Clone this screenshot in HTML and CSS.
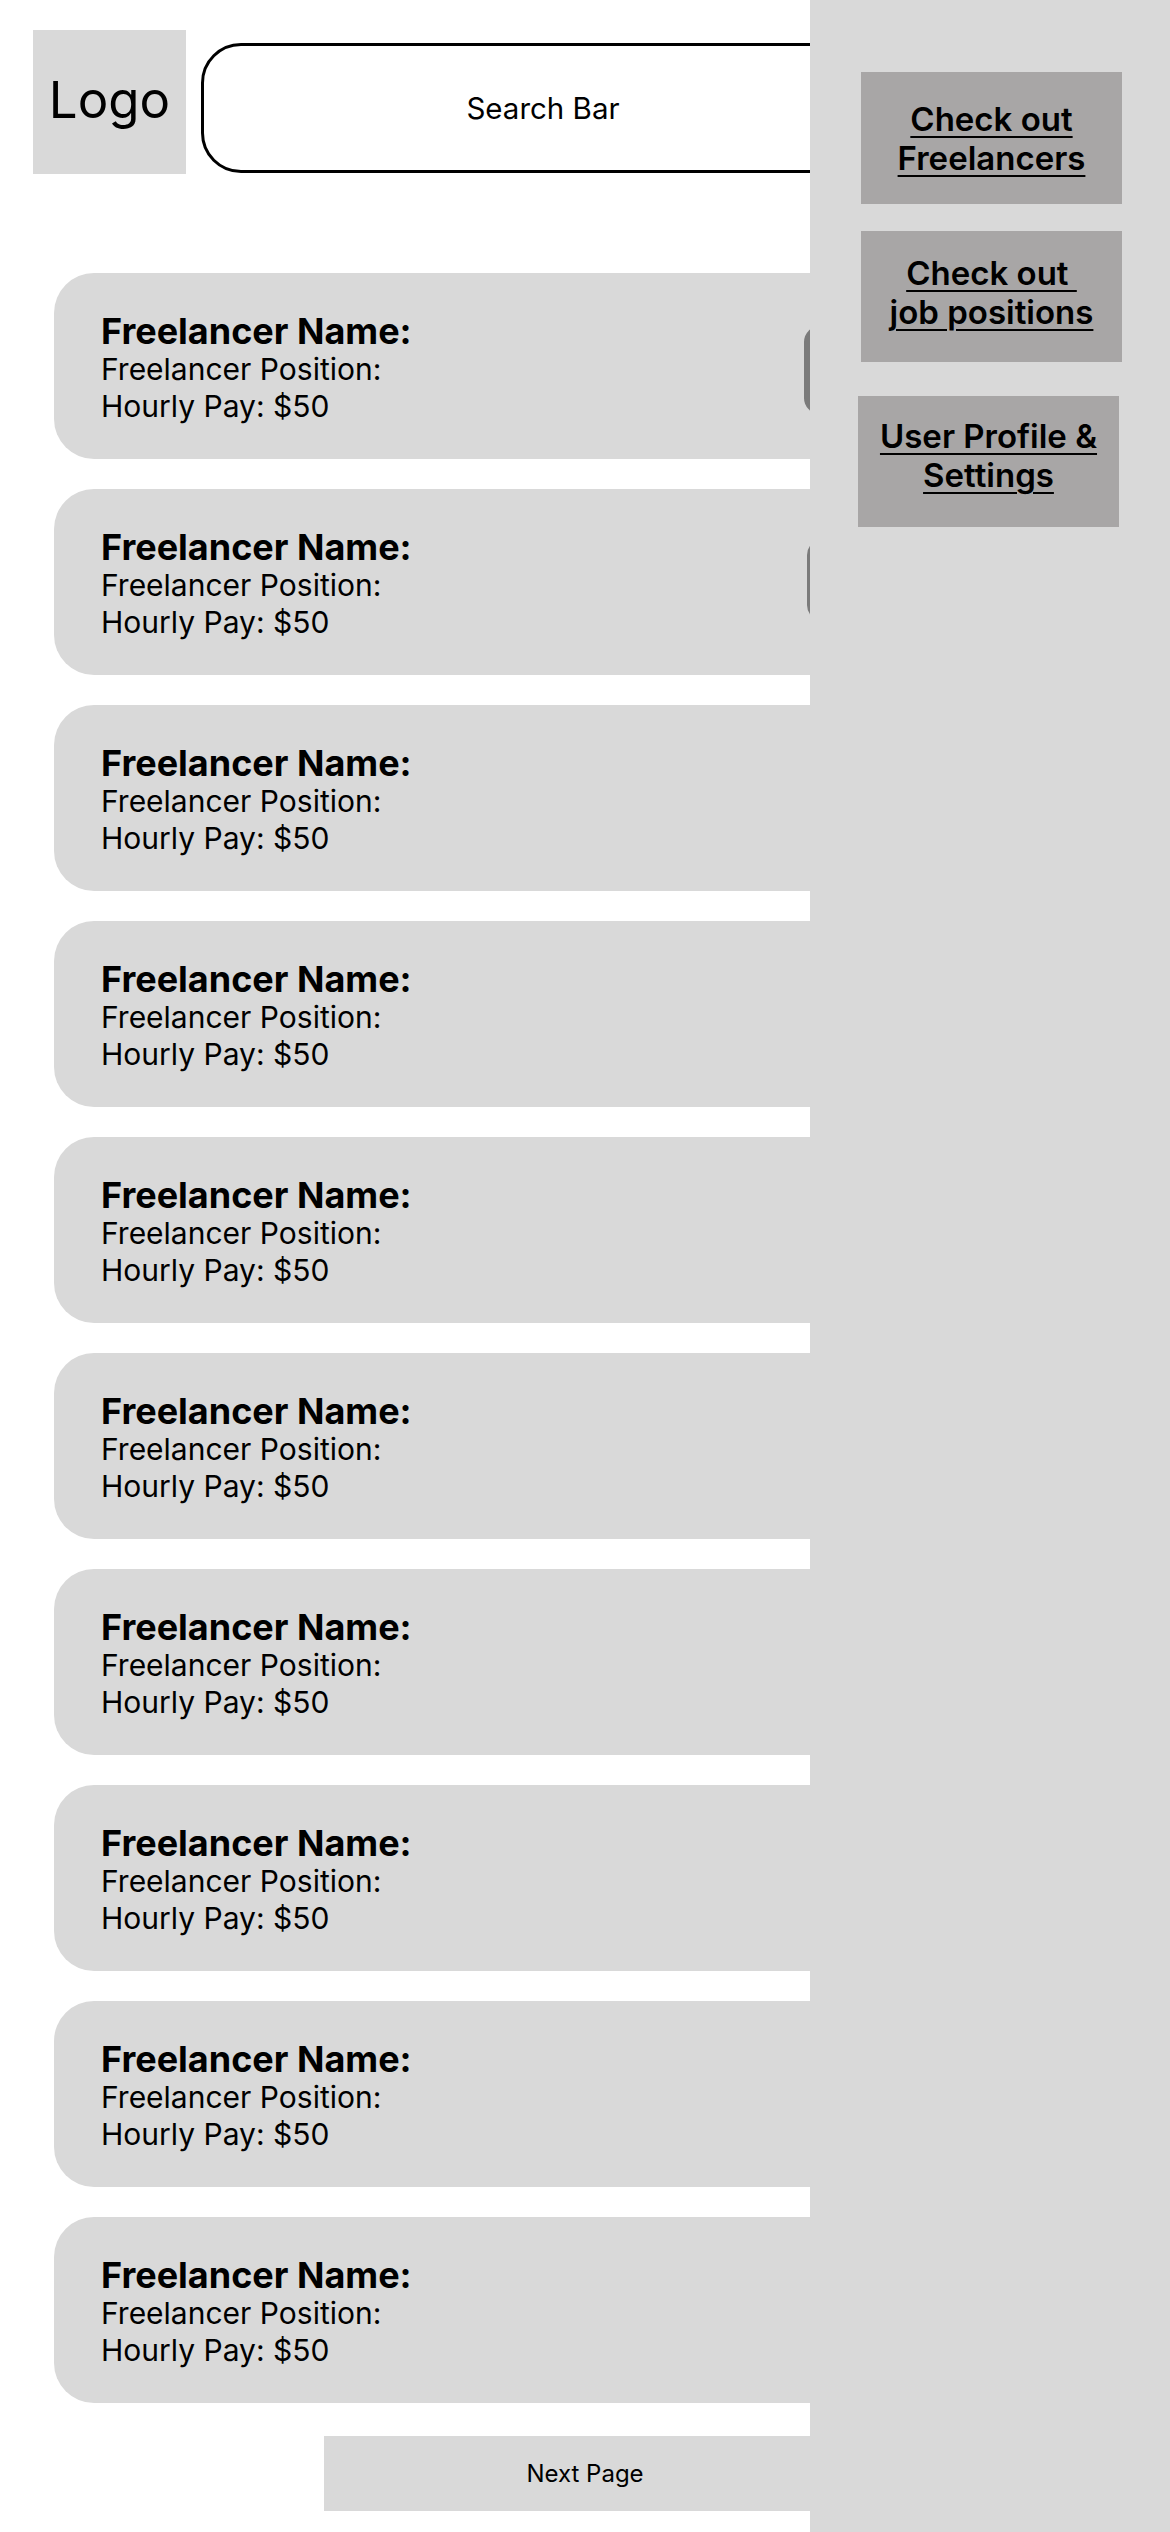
FILE: index.html
```html
<!DOCTYPE html>
<html lang="en">
<head>
<meta charset="utf-8">
<title>Freelancers</title>
<link rel="stylesheet" href="styles.css">
</head>
<body>
<div class="page">
  <main class="main">
    <header class="top">
      <div class="logo">Logo</div>
      <div class="search">Search Bar</div>
    </header>
    <section class="list">
      <article class="card"><div class="info"><div class="name">Freelancer Name:</div><div class="line">Freelancer Position:</div><div class="line">Hourly Pay: $50</div></div><div class="peek peek-a"></div></article>
      <article class="card"><div class="info"><div class="name">Freelancer Name:</div><div class="line">Freelancer Position:</div><div class="line">Hourly Pay: $50</div></div><div class="peek peek-b"></div></article>
      <article class="card"><div class="info"><div class="name">Freelancer Name:</div><div class="line">Freelancer Position:</div><div class="line">Hourly Pay: $50</div></div></article>
      <article class="card"><div class="info"><div class="name">Freelancer Name:</div><div class="line">Freelancer Position:</div><div class="line">Hourly Pay: $50</div></div></article>
      <article class="card"><div class="info"><div class="name">Freelancer Name:</div><div class="line">Freelancer Position:</div><div class="line">Hourly Pay: $50</div></div></article>
      <article class="card"><div class="info"><div class="name">Freelancer Name:</div><div class="line">Freelancer Position:</div><div class="line">Hourly Pay: $50</div></div></article>
      <article class="card"><div class="info"><div class="name">Freelancer Name:</div><div class="line">Freelancer Position:</div><div class="line">Hourly Pay: $50</div></div></article>
      <article class="card"><div class="info"><div class="name">Freelancer Name:</div><div class="line">Freelancer Position:</div><div class="line">Hourly Pay: $50</div></div></article>
      <article class="card"><div class="info"><div class="name">Freelancer Name:</div><div class="line">Freelancer Position:</div><div class="line">Hourly Pay: $50</div></div></article>
      <article class="card"><div class="info"><div class="name">Freelancer Name:</div><div class="line">Freelancer Position:</div><div class="line">Hourly Pay: $50</div></div></article>
    </section>
    <div class="next">Next Page</div>
  </main>
  <aside class="side">
    <a class="nav nav-1" href="#"><span>Check out<br>Freelancers</span></a>
    <a class="nav nav-2" href="#"><span>Check out&nbsp;<br>job positions</span></a>
    <a class="nav nav-3" href="#"><span>User Profile &amp;<br>Settings</span></a>
  </aside>
</div>
</body>
</html>
```
FILE: styles.css
```css
html, body {
  margin: 0;
  padding: 0;
  background: #ffffff;
}

body {
  font-family: Inter, "Noto Sans", "Liberation Sans", sans-serif;
  color: #000000;
}

.page {
  display: flex;
  width: 1170px;
  min-height: 2532px;
}

.main {
  flex: none;
  width: 810px;
  overflow: hidden;
  padding-bottom: 21px;
}

.top {
  display: flex;
  align-items: flex-start;
  gap: 15px;
  padding: 30px 0 0 33px;
}

.logo {
  flex: none;
  box-sizing: border-box;
  width: 153px;
  height: 144px;
  padding-bottom: 6px;
  background: #d9d9d9;
  display: flex;
  align-items: center;
  justify-content: center;
  font-size: 51px;
  line-height: 1;
}

.search {
  flex: none;
  box-sizing: border-box;
  width: 684px;
  height: 130px;
  margin-top: 13px;
  border: 3px solid #000000;
  border-radius: 40px;
  display: flex;
  align-items: center;
  justify-content: center;
  font-size: 29.5px;
}

.list {
  display: flex;
  flex-direction: column;
  gap: 30px;
  margin-top: 99px;
  padding-left: 54px;
}

.card {
  flex: none;
  box-sizing: border-box;
  width: 860px;
  height: 186px;
  background: #d9d9d9;
  border-radius: 40px;
  display: flex;
  align-items: flex-start;
  padding: 38px 0 0 47px;
}

.info {
  flex: none;
  width: 703px;
}

.name {
  font-size: 36px;
  line-height: 40px;
  font-weight: 700;
}

.line {
  font-size: 30px;
  line-height: 36.5px;
  font-weight: 400;
}

.peek {
  flex: none;
  width: 80px;
  background: #7b7b7b;
  border-radius: 16px;
}

.peek-a {
  height: 88px;
  margin-top: 15px;
}

.peek-b {
  height: 82px;
  margin-top: 12px;
  margin-left: 3px;
}

.next {
  width: 522px;
  height: 75px;
  margin: 33px 0 0 324px;
  background: #d9d9d9;
  display: flex;
  align-items: center;
  justify-content: center;
  font-size: 24px;
}

.side {
  flex: none;
  width: 360px;
  background: #d9d9d9;
  display: flex;
  flex-direction: column;
  align-items: flex-start;
  padding-top: 72px;
}

.nav {
  box-sizing: border-box;
  width: 261px;
  height: 132px;
  margin-left: 51px;
  padding-top: 28px;
  background: #a8a6a6;
  display: flex;
  align-items: flex-start;
  justify-content: center;
  text-align: center;
  color: #000000;
  font-size: 33px;
  line-height: 39px;
  font-weight: 600;
  text-decoration: none;
}

.nav span {
  text-decoration: underline;
  text-decoration-thickness: 2px;
  text-underline-offset: 5px;
}

.nav-2 {
  height: 131px;
  margin-top: 27px;
  padding-top: 23px;
}

.nav-3 {
  height: 131px;
  margin-top: 34px;
  margin-left: 48px;
  padding-top: 21px;
}
```
